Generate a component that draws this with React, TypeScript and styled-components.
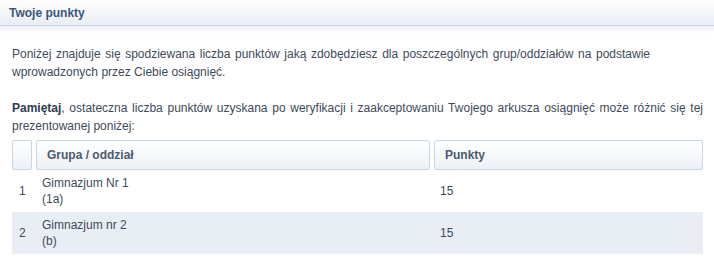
import React from "react";
import styled, { createGlobalStyle } from "styled-components";

const Global = createGlobalStyle`
  html, body { margin: 0; padding: 0; background: #fff; }
  body { font-family: "Liberation Sans", Arial, sans-serif; font-size: 12px; color: #3d4a5a; }
`;

const Panel = styled.div`
  width: 714px;
  background: #fff;
`;

const PanelHeader = styled.div`
  height: 26px;
  box-sizing: border-box;
  padding: 0 9px;
  display: flex;
  align-items: center;
  background: linear-gradient(to bottom, #ffffff 0%, #e8edf3 100%);
  border-bottom: 1px solid #c8d4e1;
  font-weight: bold;
  font-size: 12px;
  color: #3b5878;
`;

const HeaderShade = styled.div`
  height: 8px;
  background: linear-gradient(to bottom, #edf1f6 0%, #ffffff 100%);
`;

const Body = styled.div`
  padding: 11px 11px 0 12px;
`;

const Para = styled.p<{ $width?: number }>`
  margin: 0 0 18px;
  line-height: 18px;
  text-align: justify;
  width: ${(p) => (p.$width ? `${p.$width}px` : "auto")};
  &:last-of-type { margin-bottom: 5px; }
  strong { color: #2e3d4f; }
`;

const Grid = styled.div`
  display: grid;
  grid-template-columns: 24px 398px 1fr;
`;

const HeadCell = styled.div<{ $last?: boolean }>`
  height: 30px;
  box-sizing: border-box;
  margin-right: ${(p) => (p.$last ? "0" : "4px")};
  border: 1px solid #c9d6e3;
  border-radius: 2px;
  background: linear-gradient(to bottom, #ffffff 0%, #edf1f6 100%);
  display: flex;
  align-items: center;
  padding-left: 10px;
  font-weight: bold;
  color: #4a5b6e;
`;

const Cell = styled.div<{ $alt?: boolean }>`
  min-height: 42px;
  box-sizing: border-box;
  padding: 5px 6px;
  display: flex;
  flex-direction: column;
  justify-content: center;
  line-height: 16px;
  background: ${(p) => (p.$alt ? "#e9eef5" : "#fff")};
  color: #3d4a5a;
`;

const NumCell = styled(Cell)`
  padding-left: 7px;
`;

const Sub = styled.span`
  color: #3d4a5a;
`;

const rows = [
  { n: 1, name: "Gimnazjum Nr 1", sub: "(1a)", pts: 15 },
  { n: 2, name: "Gimnazjum nr 2", sub: "(b)", pts: 15 },
];

export default function App() {
  return (
    <>
      <Global />
      <Panel>
        <PanelHeader>Twoje punkty</PanelHeader>
        <HeaderShade />
        <Body>
          <Para $width={638}>
            Poniżej znajduje się spodziewana liczba punktów jaką zdobędziesz dla poszczególnych grup/oddziałów na podstawie wprowadzonych przez Ciebie osiągnięć.
          </Para>
          <Para>
            <strong>Pamiętaj</strong>, ostateczna liczba punktów uzyskana po weryfikacji i zaakceptowaniu Twojego arkusza osiągnięć może różnić się tej prezentowanej poniżej:
          </Para>
          <Grid>
            <HeadCell />
            <HeadCell>Grupa / oddział</HeadCell>
            <HeadCell $last>Punkty</HeadCell>
            {rows.map((r, i) => (
              <React.Fragment key={r.n}>
                <NumCell $alt={i % 2 === 1}>{r.n}</NumCell>
                <Cell $alt={i % 2 === 1}>
                  <span>{r.name}</span>
                  <Sub>{r.sub}</Sub>
                </Cell>
                <Cell $alt={i % 2 === 1}>{r.pts}</Cell>
              </React.Fragment>
            ))}
          </Grid>
        </Body>
      </Panel>
    </>
  );
}
